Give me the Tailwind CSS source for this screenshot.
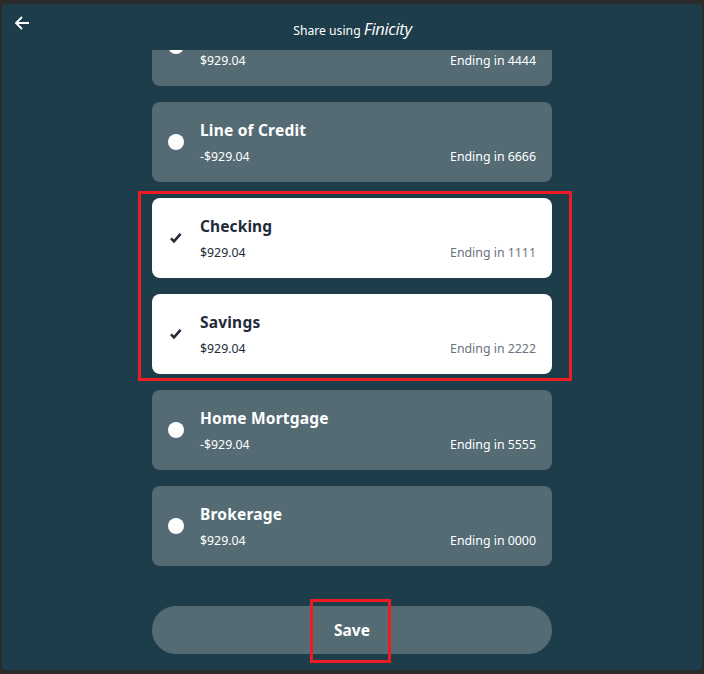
<!DOCTYPE html>
<html lang="en">
<head>
  <meta charset="UTF-8">
  <meta name="viewport" content="width=device-width, initial-scale=1.0">
  <title>Share using Finicity</title>
  <script src="https://cdn.jsdelivr.net/npm/@tailwindcss/browser@4"></script>
</head>
<body class="bg-[#2b2b2b] font-['Noto_Sans',sans-serif] w-[704px] h-[674px] overflow-hidden relative">
  <div class="mx-[2px] mt-[4px] h-[666px] bg-[#1e3d4b] rounded-[4px] flex flex-col items-center relative">
    <!-- header -->
    <div class="w-full h-[46px] shrink-0 relative flex justify-center items-start pt-[15px] pl-[1px]">
      <button class="absolute left-[12px] top-[11px] text-white">
        <svg width="16" height="16" viewBox="0 0 16 16" fill="none" stroke="currentColor" stroke-width="1.8"><path d="M15 8H2M8 2L2 8l6 6"/></svg>
      </button>
      <span class="text-white text-[12.2px] leading-[20px]">Share using <span class="italic text-[16.5px] font-['Open_Sans',sans-serif] tracking-[-0.3px]">Finicity</span></span>
    </div>

    <!-- accounts -->
    <div class="w-[400px] h-[516px] overflow-hidden shrink-0">
      <div class="flex flex-col gap-[16px] -mt-[44px]">
        <!-- top card scrolled under the header, only its lower part shows -->
        <div class="h-[80px] rounded-[8px] bg-[#546b74] text-white flex items-center pl-[16px] pr-[16px]">
          <span class="w-[16px] h-[16px] rounded-full bg-white shrink-0"></span>
          <div class="ml-[16px] flex-1">
            <div class="h-[24px]"></div>
            <div class="flex justify-between text-[12.35px] leading-[18px] mt-[6px]"><span>$929.04</span><span>Ending in 4444</span></div>
          </div>
        </div>
        <div class="h-[80px] rounded-[8px] bg-[#546b74] text-white flex items-center pl-[16px] pr-[16px]">
          <span class="w-[16px] h-[16px] rounded-full bg-white shrink-0"></span>
          <div class="ml-[16px] flex-1">
            <div class="font-bold text-[15.5px] leading-[24px] tracking-[0.2px]">Line of Credit</div>
            <div class="flex justify-between text-[12.35px] leading-[18px] mt-[6px]"><span>-$929.04</span><span>Ending in 6666</span></div>
          </div>
        </div>
        <div class="h-[80px] rounded-[8px] bg-white text-[#232b3a] flex items-center pl-[16px] pr-[16px]">
          <svg class="shrink-0" width="16" height="16" viewBox="0 0 16 16" fill="none" stroke="currentColor" stroke-width="2.6"><path d="M3 8.3l3 3L12.6 3.9"/></svg>
          <div class="ml-[16px] flex-1">
            <div class="font-bold text-[15.5px] leading-[24px] tracking-[0.1px]">Checking</div>
            <div class="flex justify-between text-[12.35px] leading-[18px] mt-[6px]"><span>$929.04</span><span class="text-[#6b7280]">Ending in 1111</span></div>
          </div>
        </div>
        <div class="h-[80px] rounded-[8px] bg-white text-[#232b3a] flex items-center pl-[16px] pr-[16px]">
          <svg class="shrink-0" width="16" height="16" viewBox="0 0 16 16" fill="none" stroke="currentColor" stroke-width="2.6"><path d="M3 8.3l3 3L12.6 3.9"/></svg>
          <div class="ml-[16px] flex-1">
            <div class="font-bold text-[15.5px] leading-[24px] tracking-[0.2px]">Savings</div>
            <div class="flex justify-between text-[12.35px] leading-[18px] mt-[6px]"><span>$929.04</span><span class="text-[#6b7280]">Ending in 2222</span></div>
          </div>
        </div>
        <div class="h-[80px] rounded-[8px] bg-[#546b74] text-white flex items-center pl-[16px] pr-[16px]">
          <span class="w-[16px] h-[16px] rounded-full bg-white shrink-0"></span>
          <div class="ml-[16px] flex-1">
            <div class="font-bold text-[15.5px] leading-[24px] tracking-[0.2px]">Home Mortgage</div>
            <div class="flex justify-between text-[12.35px] leading-[18px] mt-[6px]"><span>-$929.04</span><span>Ending in 5555</span></div>
          </div>
        </div>
        <div class="h-[80px] rounded-[8px] bg-[#546b74] text-white flex items-center pl-[16px] pr-[16px]">
          <span class="w-[16px] h-[16px] rounded-full bg-white shrink-0"></span>
          <div class="ml-[16px] flex-1">
            <div class="font-bold text-[15.5px] leading-[24px] tracking-[0.2px]">Brokerage</div>
            <div class="flex justify-between text-[12.35px] leading-[18px] mt-[6px]"><span>$929.04</span><span>Ending in 0000</span></div>
          </div>
        </div>
      </div>
    </div>

    <button class="mt-[40px] w-[400px] h-[48px] shrink-0 rounded-full bg-[#546b74] text-white font-bold text-[15.5px] pt-[2px]">Save</button>
  </div>

  <!-- annotation boxes -->
  <div class="absolute left-[138px] top-[191px] w-[434px] h-[190px] border-[3px] border-[#ed1c24]"></div>
  <div class="absolute left-[310px] top-[599px] w-[81px] h-[64px] border-[3px] border-[#ed1c24]"></div>
</body>
</html>
